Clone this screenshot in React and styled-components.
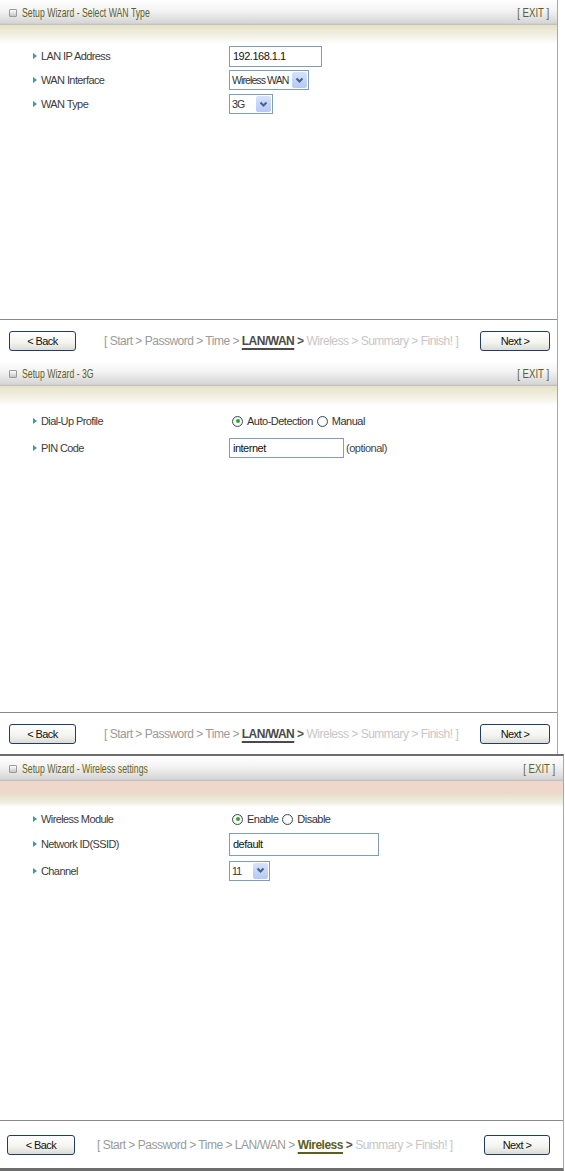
import React from "react";
import styled, { createGlobalStyle } from "styled-components";

const GlobalStyle = createGlobalStyle`
  html, body {
    margin: 0;
    padding: 0;
    background: #fff;
  }
  body {
    font-family: "Liberation Sans", Arial, sans-serif;
    width: 565px;
    overflow: hidden;
  }
`;

const Page = styled.div`
  display: flex;
  flex-direction: column;
  width: 565px;
`;

const Panel = styled.div`
  display: flex;
  flex-direction: column;
  box-sizing: border-box;
  width: ${p => p.width}px;
  height: ${p => p.height}px;
  border-right: 1px solid #a8a8a8;
  border-top: ${p => (p.topLine ? "2px solid #6d6d6d" : "none")};
  border-bottom: ${p => (p.bottomLine ? "3px solid #6d6d6d" : "none")};
  background: #fff;
`;

const Header = styled.div`
  display: flex;
  align-items: center;
  height: 25px;
  padding: 0 8px 0 9px;
  background: linear-gradient(#ffffff 0%, #f4f4f4 40%, #d6d6d6 92%, #b9b9b9 100%);
  color: ${p => p.tint};
  font-size: 13px;
  flex-shrink: 0;
`;

const HeadIcon = styled.span`
  width: 6px;
  height: 6px;
  border: 1px solid #9a9a9a;
  border-radius: 1px;
  background: linear-gradient(#ffffff, #c4c4c4);
  margin-right: 5px;
  flex-shrink: 0;
`;

const Title = styled.span`
  flex: 1;
  white-space: nowrap;
  display: inline-block;
  transform: scaleX(0.67);
  transform-origin: left center;
`;

const Exit = styled.span`
  white-space: pre;
  display: inline-block;
  transform: scaleX(0.74);
  transform-origin: right center;
`;

const Band = styled.div`
  height: ${p => p.height}px;
  flex-shrink: 0;
  background: ${p =>
    p.pink
      ? "linear-gradient(#efd8cb 0%, #efd8cb 45%, #e6e2ce 55%, #f2f0e4 85%, #ffffff 100%)"
      : "linear-gradient(#e6e2c8 0%, #efeddd 45%, #ffffff 100%)"};
`;

const Body = styled.div`
  flex: 1;
  display: flex;
  flex-direction: column;
`;

const Row = styled.div`
  display: flex;
  align-items: center;
  height: ${p => p.h}px;
`;

const Label = styled.div`
  width: 229px;
  flex-shrink: 0;
  box-sizing: border-box;
  padding-left: 33px;
  display: flex;
  align-items: center;
  font-size: 11px;
  letter-spacing: -0.6px;
  color: #3c3c3c;
`;

const Arrow = styled.span`
  width: 0;
  height: 0;
  border-top: 3px solid transparent;
  border-bottom: 3px solid transparent;
  border-left: 4px solid #3a9c9c;
  margin-right: 4px;
`;

const Value = styled.div`
  display: flex;
  align-items: center;
  font-size: 11px;
  letter-spacing: -0.5px;
  color: #333;
  white-space: nowrap;
`;

const TextBox = styled.div`
  box-sizing: border-box;
  width: ${p => p.w}px;
  height: ${p => p.h}px;
  border: 1px solid #7f9db9;
  padding: 0 3px;
  display: flex;
  align-items: center;
  font-size: 11px;
  color: #111;
  background: #fff;
`;

const Hint = styled.span`
  margin-left: 2px;
  color: #444;
`;

const SelectBox = styled.div`
  box-sizing: border-box;
  width: ${p => p.w}px;
  height: 20px;
  border: 1px solid #7f9db9;
  display: flex;
  align-items: center;
  background: #fff;
  color: #333;
`;

const SelectText = styled.span`
  flex: 1;
  padding-left: 2px;
  font-size: 10.5px;
  letter-spacing: -0.9px;
  white-space: nowrap;
  overflow: hidden;
`;

const SelectBtn = styled.span`
  width: 15px;
  height: 16px;
  margin-right: 1px;
  flex-shrink: 0;
  border-radius: 2px;
  background: linear-gradient(#d6e2fd, #b5c9f5);
  display: flex;
  align-items: center;
  justify-content: center;
`;

const Radio = styled.span`
  box-sizing: border-box;
  width: 11px;
  height: 11px;
  border-radius: 50%;
  border: 1px solid #3a4a5c;
  background: radial-gradient(circle, #fff 40%, #e4e4dc 100%);
  display: inline-flex;
  align-items: center;
  justify-content: center;
  margin: 0 4px 0 ${p => p.gap}px;
`;

const Dot = styled.span`
  width: 4px;
  height: 4px;
  border-radius: 50%;
  background: #2aa82a;
`;

const Footer = styled.div`
  display: flex;
  align-items: center;
  height: ${p => p.h}px;
  border-top: 1px solid #8a8a8a;
  padding: 0 ${p => p.padR}px 0 ${p => p.padL}px;
  flex-shrink: 0;
`;

const Btn = styled.button`
  box-sizing: border-box;
  flex-shrink: 0;
  width: ${p => p.w}px;
  height: 20px;
  border: 1px solid #1f3c6c;
  border-radius: 3px;
  background: linear-gradient(#ffffff 0%, #f3f3ef 60%, #dcdcd4 100%);
  font-family: inherit;
  font-size: 11px;
  letter-spacing: -0.6px;
  color: #111;
  padding: 0;
`;

const Crumbs = styled.div`
  flex: 1;
  min-width: 0;
  padding-left: ${p => p.pad}px;
  font-size: 12px;
  letter-spacing: -0.5px;
  white-space: pre;
`;

const Part = styled.span`
  color: ${p => (p.kind === "done" ? "#9a9a9a" : p.kind === "now" ? p.nowColor : "#c6c6c6")};
  font-weight: ${p => (p.kind === "now" ? "bold" : "normal")};
  text-decoration: ${p => (p.under ? "underline" : "none")};
  text-decoration-color: ${p => p.nowColor};
  text-underline-offset: 3px;
  text-decoration-thickness: 2px;
`;

const Chevron = () => (
  <svg width="9" height="7" viewBox="0 0 9 7">
    <path d="M1.5 1.5 L4.5 4.5 L7.5 1.5" stroke="#4d6185" strokeWidth="2" fill="none" />
  </svg>
);

const steps = ["Start", "Password", "Time", "LAN/WAN", "Wireless", "Summary", "Finish!"];

const Breadcrumb = ({ current, nowColor, pad }) => {
  const kindOf = i => (i < current ? "done" : i === current ? "now" : "todo");
  return (
    <Crumbs pad={pad}>
      <Part kind="done">[ </Part>
      {steps.map((s, i) => (
        <React.Fragment key={s}>
          <Part kind={kindOf(i)} nowColor={nowColor} under={i === current}>
            {s}
          </Part>
          <Part kind={i === current ? "now" : kindOf(i)} nowColor="#555">
            {i < steps.length - 1 ? " > " : " ]"}
          </Part>
        </React.Fragment>
      ))}
    </Crumbs>
  );
};

const Field = ({ label, h, children }) => (
  <Row h={h}>
    <Label>
      <Arrow />
      {label}
    </Label>
    <Value>{children}</Value>
  </Row>
);

const Select = ({ w, value }) => (
  <SelectBox w={w}>
    <SelectText>{value}</SelectText>
    <SelectBtn>
      <Chevron />
    </SelectBtn>
  </SelectBox>
);

const RadioPick = ({ options, checked }) =>
  options.map((o, i) => (
    <React.Fragment key={o}>
      <Radio gap={i === 0 ? 3 : 4}>{i === checked && <Dot />}</Radio>
      {o}
    </React.Fragment>
  ));

const Wizard = ({ title, tint, width, height, band, pink, bodyPad, footer, current, nowColor, crumbPad, btn, topLine, bottomLine, children }) => (
  <Panel width={width} height={height} topLine={topLine} bottomLine={bottomLine}>
    <Header tint={tint}>
      <HeadIcon />
      <Title>{title}</Title>
      <Exit>[ EXIT ]</Exit>
    </Header>
    <Band height={band} pink={pink} />
    <Body style={{ paddingTop: bodyPad }}>{children}</Body>
    <Footer h={footer} padL={btn.l} padR={btn.r}>
      <Btn w={btn.back}>&lt; Back</Btn>
      <Breadcrumb current={current} nowColor={nowColor} pad={crumbPad} />
      <Btn w={btn.next}>Next &gt;</Btn>
    </Footer>
  </Panel>
);

export default function App() {
  return (
    <Page>
      <GlobalStyle />
      <Wizard
        title="Setup Wizard - Select WAN Type"
        tint="#5e5e2c"
        width={558}
        height={361}
        band={19}
        bodyPad={0}
        footer={41}
        current={3}
        nowColor="#4a4a4a"
        crumbPad={28}
        btn={{ l: 9, r: 7, back: 67, next: 70 }}
      >
        <Field label="LAN IP Address" h={24}>
          <TextBox w={93} h={21}>192.168.1.1</TextBox>
        </Field>
        <Field label="WAN Interface" h={24}>
          <Select w={80} value="Wireless WAN" />
        </Field>
        <Field label="WAN Type" h={24}>
          <Select w={44} value="3G" />
        </Field>
      </Wizard>
      <Wizard
        title="Setup Wizard - 3G"
        tint="#5e5e2c"
        width={558}
        height={393}
        band={20}
        bodyPad={2}
        footer={41}
        current={3}
        nowColor="#4a4a4a"
        crumbPad={28}
        btn={{ l: 9, r: 7, back: 67, next: 70 }}
      >
        <Field label="Dial-Up Profile" h={26}>
          <RadioPick options={["Auto-Detection", "Manual"]} checked={0} />
        </Field>
        <Field label="PIN Code" h={28}>
          <TextBox w={115} h={20}>internet</TextBox>
          <Hint>(optional)</Hint>
        </Field>
      </Wizard>
      <Wizard
        title="Setup Wizard - Wireless settings"
        tint="#66661e"
        width={564}
        height={417}
        band={26}
        pink
        bodyPad={0}
        footer={47}
        current={4}
        nowColor="#5e5e22"
        crumbPad={22}
        topLine
        bottomLine
        btn={{ l: 7, r: 13, back: 68, next: 66 }}
      >
        <Field label="Wireless Module" h={24}>
          <RadioPick options={["Enable", "Disable"]} checked={0} />
        </Field>
        <Field label="Network ID(SSID)" h={26}>
          <TextBox w={150} h={23}>default</TextBox>
        </Field>
        <Field label="Channel" h={27}>
          <Select w={41} value="11" />
        </Field>
      </Wizard>
    </Page>
  );
}
